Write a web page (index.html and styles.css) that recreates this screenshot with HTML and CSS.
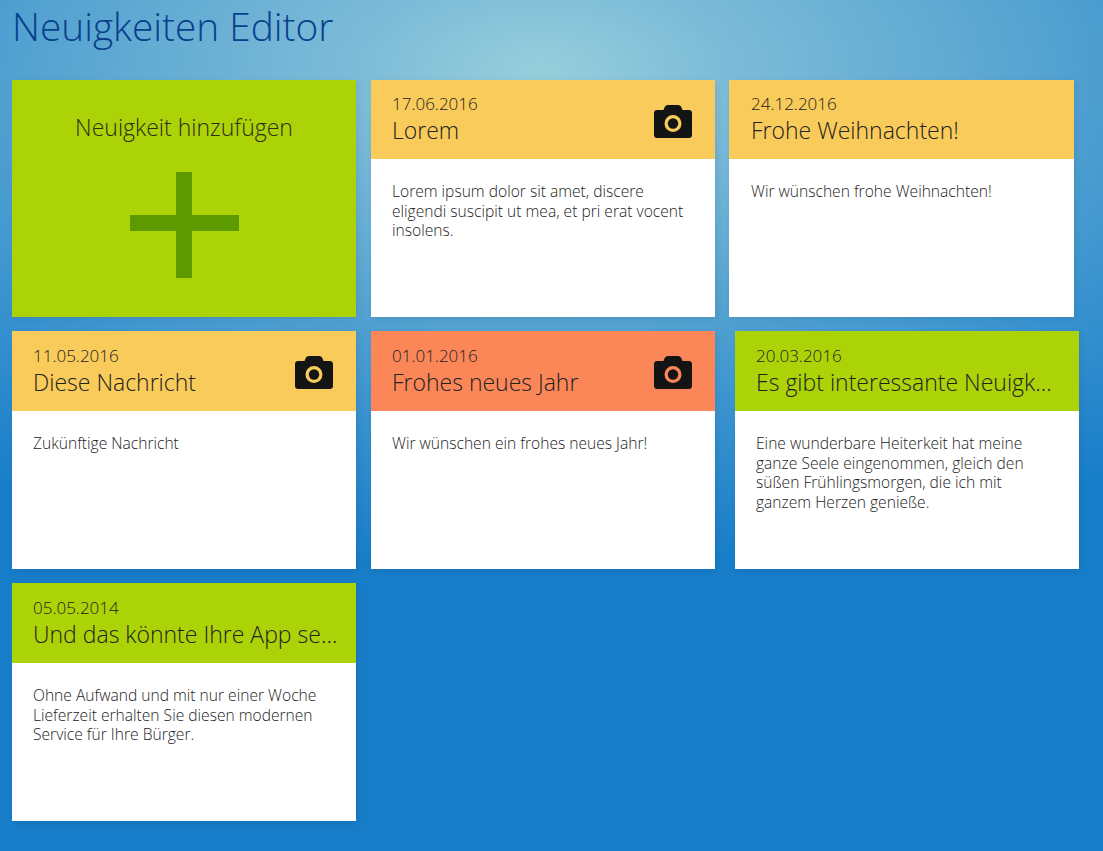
FILE: index.html
```html
<!DOCTYPE html>
<html lang="de">
<head>
<meta charset="utf-8">
<title>Neuigkeiten Editor</title>
<link rel="stylesheet" href="styles.css">
</head>
<body>
<svg class="defs" width="0" height="0" aria-hidden="true"><defs>
<symbol id="cam" viewBox="0 0 38 33"><path fill-rule="evenodd" d="M10.500 2.500C11 1 12.300 0 14 0h10c1.700 0 3 1 3.500 2.500L28.500 5H35c1.700 0 3 1.300 3 3v22c0 1.700-1.300 3-3 3H3c-1.700 0-3-1.300-3-3V8c0-1.700 1.300-3 3-3h6.500zM19 10a8.500 8.500 0 1 0 0 17 8.500 8.500 0 0 0 0-17z" fill="#141414"/><circle cx="19" cy="18.500" r="5.200" fill="#141414"/></symbol>
</defs></svg>
<h1 class="page-title">Neuigkeiten Editor</h1>
<main class="board">
  <div class="row">
    <a class="card add-card">
      <span class="add-label">Neuigkeit hinzufügen</span>
      <svg class="plus" width="109" height="106" viewBox="0 0 109 106"><path d="M46 0h16v43h47v16H62v47H46V59H0V43h46z" fill="#5c9a00"/></svg>
    </a>
    <article class="card">
      <header class="card-head yellow">
        <div class="head-text"><div class="date">17.06.2016</div><h2 class="title">Lorem</h2></div>
        <svg class="cam"><use href="#cam"/></svg>
      </header>
      <p class="body">Lorem ipsum dolor sit amet, discere eligendi suscipit ut mea, et pri erat vocent insolens.</p>
    </article>
    <article class="card wide">
      <header class="card-head yellow">
        <div class="head-text"><div class="date">24.12.2016</div><h2 class="title">Frohe Weihnachten!</h2></div>
      </header>
      <p class="body">Wir wünschen frohe Weihnachten!</p>
    </article>
  </div>
  <div class="row">
    <article class="card">
      <header class="card-head yellow">
        <div class="head-text"><div class="date">11.05.2016</div><h2 class="title">Diese Nachricht</h2></div>
        <svg class="cam"><use href="#cam"/></svg>
      </header>
      <p class="body">Zukünftige Nachricht</p>
    </article>
    <article class="card">
      <header class="card-head orange">
        <div class="head-text"><div class="date">01.01.2016</div><h2 class="title">Frohes neues Jahr</h2></div>
        <svg class="cam"><use href="#cam"/></svg>
      </header>
      <p class="body">Wir wünschen ein frohes neues Jahr!</p>
    </article>
    <article class="card shifted">
      <header class="card-head green">
        <div class="head-text"><div class="date">20.03.2016</div><h2 class="title">Es gibt interessante Neuigkeiten</h2></div>
      </header>
      <p class="body">Eine wunderbare Heiterkeit hat meine ganze Seele eingenommen, gleich den süßen Frühlingsmorgen, die ich mit ganzem Herzen genieße.</p>
    </article>
  </div>
  <div class="row">
    <article class="card">
      <header class="card-head green">
        <div class="head-text"><div class="date">05.05.2014</div><h2 class="title">Und das könnte Ihre App sein</h2></div>
      </header>
      <p class="body">Ohne Aufwand und mit nur einer Woche Lieferzeit erhalten Sie diesen modernen Service für Ihre Bürger.</p>
    </article>
  </div>
</main>
</body>
</html>
```
FILE: styles.css
```css
* { box-sizing: border-box; }
html, body { height: 100%; }
body {
  margin: 0;
  overflow: hidden;
  font-family: "Open Sans", sans-serif;
  font-weight: 300;
  color: #222;
  background-color: #177dc9;
  background-image: radial-gradient(ellipse 1000px 500px at 540px 70px, #97cedc 0%, #7dbcd8 18%, #55a3d1 50%, #3a93cf 70%, #177dc9 100%);
  background-repeat: no-repeat;
}
.defs { display: block; height: 0; }
.page-title {
  margin: 0;
  padding: 2px 0 0 12px;
  height: 80px;
  font-size: 38.800px;
  line-height: 48px;
  font-weight: 300;
  color: #08408c;
}
.board { padding-left: 12px; display: flex; flex-direction: column; gap: 14px; }
.row { display: flex; gap: 15px; }
.card {
  width: 344px;
  height: 238px;
  background: #fff;
  box-shadow: 2px 2px 6px rgba(0, 0, 0, .08);
  display: flex;
  flex-direction: column;
}
.row:first-child .card { height: 237px; }
.row:first-child .card-head { height: 79px; padding-top: 13px; }
.wide { width: 345px; margin-left: -1px; }
.wide .card-head, .wide .body { padding-left: 22px; }
.shifted { margin-left: 5px; }
.add-card {
  background: #acd208;
  align-items: center;
  color: #2e2e14;
}
.add-label { font-size: 23px; line-height: 28px; margin-top: 33px; }
.plus { margin-top: 31px; display: block; }
.card-head {
  height: 80px;
  flex: none;
  padding: 14px 18px 0 21px;
  display: flex;
  justify-content: space-between;
}
.yellow { background: #f9cb5a; }
.orange { background: #fb8759; }
.green { background: #acd208; }
.head-text { min-width: 0; flex: 1; }
.date { font-size: 17px; line-height: 21px; }
.title {
  margin: 0;
  font-size: 23px;
  line-height: 32px;
  font-weight: 300;
  white-space: nowrap;
  overflow: hidden;
  text-overflow: ellipsis;
}
.cam { width: 38px; height: 33px; flex: none; margin: 11px 5px 0 0; }
.row:first-child .card-head .cam { margin-top: 12px; }
.body {
  margin: 0;
  padding: 23px 22px 0 21px;
  font-size: 15.600px;
  line-height: 19.600px;
}
```
